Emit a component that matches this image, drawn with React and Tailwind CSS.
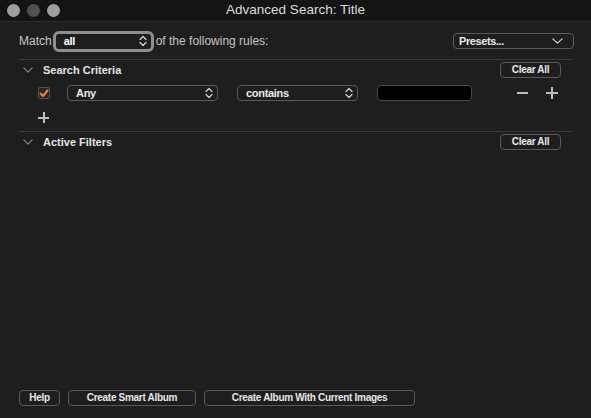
import React from "react";

const font = { fontFamily: '"Liberation Sans", Arial, sans-serif' };

function Updown() {
  return (
    <svg width="8" height="12" viewBox="0 0 8 12" fill="none" stroke="#d8d8d8" strokeWidth="1.2" strokeLinecap="round" strokeLinejoin="round">
      <path d="M1 4.5 L4 1.5 L7 4.5" />
      <path d="M1 7.5 L4 10.5 L7 7.5" />
    </svg>
  );
}

function Chevron({ color = "#8a8a8a", w = 10, h = 6 }) {
  return (
    <svg width={w} height={h} viewBox="0 0 10 6" fill="none" stroke={color} strokeWidth="1.1" strokeLinecap="round" strokeLinejoin="round" preserveAspectRatio="none">
      <path d="M0.8 0.8 L5 5.2 L9.2 0.8" />
    </svg>
  );
}

function Btn({ children, className = "" }) {
  return (
    <div className={"h-[16px] flex items-center justify-center rounded-[4px] border border-[#5a5a5a] text-[10px] tracking-[-0.3px] font-bold text-[#e8e8e8] leading-none " + className}>
      {children}
    </div>
  );
}

export default function App() {
  return (
    <div className="w-[591px] h-[418px] bg-[#1e1e1e] flex flex-col overflow-hidden" style={font}>
      {/* Title bar */}
      <div className="h-[22px] bg-[#141414] border-b border-[#2c2c2c] flex items-center relative shrink-0">
        <div className="flex items-center gap-[7px] pl-[7px]">
          <div className="w-[13px] h-[13px] rounded-full bg-[#9e9ea3]" />
          <div className="w-[13px] h-[13px] rounded-full bg-[#505052]" />
          <div className="w-[13px] h-[13px] rounded-full bg-[#9e9ea3]" />
        </div>
        <div className="absolute inset-0 flex items-center justify-center text-[13.5px] text-[#dcdcdc]">
          Advanced Search: Title
        </div>
      </div>

      {/* Match row */}
      <div className="flex items-center h-[37px] pl-[19px] pr-[17px] pt-[1px]">
        <span className="text-[12px] text-[#c4c4c4]">Match</span>
        <div className="ml-[1px] w-[101px] h-[21px] rounded-[6px] border-[3px] border-[#8e8e8e] flex items-center justify-between pl-[8px] pr-[4px] bg-[#1e1e1e]">
          <span className="text-[11px] tracking-[-0.3px] font-bold text-white">all</span>
          <Updown />
        </div>
        <span className="ml-[2px] text-[12px] text-[#c4c4c4]">of the following rules:</span>
        <div className="ml-auto w-[121px] h-[16px] rounded-[4px] border border-[#5a5a5a] flex items-center justify-between pl-[5px] pr-[10px]">
          <span className="text-[11px] tracking-[-0.4px] font-bold text-[#e8e8e8]">Presets...</span>
          <Chevron color="#cfcfcf" w={11} h={6} />
        </div>
      </div>

      {/* Search Criteria section */}
      <div className="mx-[19px] border-t border-[#3a3a3a]">
        <div className="flex items-center h-[20px]">
          <div className="w-[24px] flex justify-start pl-[4px]"><Chevron /></div>
          <span className="text-[11px] font-bold text-[#e4e4e4]">Search Criteria</span>
          <Btn className="ml-auto mr-[11px] w-[61px]">Clear All</Btn>
        </div>
        <div className="flex items-center h-[26px]">
          <div className="ml-[19px] w-[12px] h-[12px] rounded-[2px] border border-[#555] bg-[#262626] flex items-center justify-center">
            <svg width="10" height="9" viewBox="0 0 10 9" fill="none" stroke="#f08a1c" strokeWidth="2" strokeLinecap="round" strokeLinejoin="round">
              <path d="M1.5 4.5 L4 7 L8.5 1.5" />
            </svg>
          </div>
          <div className="ml-[17px] w-[151px] h-[16px] rounded-[4px] border border-[#5a5a5a] flex items-center justify-between pl-[8px] pr-[4px]">
            <span className="text-[11px] tracking-[-0.3px] font-bold text-[#eaeaea]">Any</span>
            <Updown />
          </div>
          <div className="ml-[19px] w-[121px] h-[16px] rounded-[4px] border border-[#5a5a5a] flex items-center justify-between pl-[8px] pr-[4px]">
            <span className="text-[11px] tracking-[-0.3px] font-bold text-[#eaeaea]">contains</span>
            <Updown />
          </div>
          <div className="ml-[19px] w-[95px] h-[16px] rounded-[4px] border border-[#4a4a4a] bg-black" />
          <div className="ml-[45px] w-[11px] flex justify-center">
            <div className="w-[11px] h-[2px] bg-[#bdbdbd]" />
          </div>
          <div className="ml-[18px] w-[12px] h-[12px] relative">
            <div className="absolute left-0 top-[5px] w-[12px] h-[2px] bg-[#bdbdbd]" />
            <div className="absolute left-[5px] top-0 w-[2px] h-[12px] bg-[#bdbdbd]" />
          </div>
        </div>
        <div className="h-[25px] flex items-start pt-[6px]">
          <div className="ml-[19px] w-[11px] h-[11px] relative">
            <div className="absolute left-0 top-[4.5px] w-[11px] h-[2px] bg-[#bdbdbd]" />
            <div className="absolute left-[4.5px] top-0 w-[2px] h-[11px] bg-[#bdbdbd]" />
          </div>
        </div>
      </div>

      {/* Active Filters section */}
      <div className="mx-[19px] border-t border-[#3a3a3a]">
        <div className="flex items-center h-[20px]">
          <div className="w-[24px] flex justify-start pl-[4px]"><Chevron /></div>
          <span className="text-[11px] font-bold text-[#e4e4e4]">Active Filters</span>
          <Btn className="ml-auto mr-[11px] w-[61px]">Clear All</Btn>
        </div>
      </div>

      <div className="flex-1" />

      {/* Bottom buttons */}
      <div className="flex items-center gap-[8px] pl-[19px] h-[16px] mb-[12px] shrink-0">
        <Btn className="w-[41px]">Help</Btn>
        <Btn className="w-[128px]">Create Smart Album</Btn>
        <Btn className="w-[211px]">Create Album With Current Images</Btn>
      </div>
    </div>
  );
}
